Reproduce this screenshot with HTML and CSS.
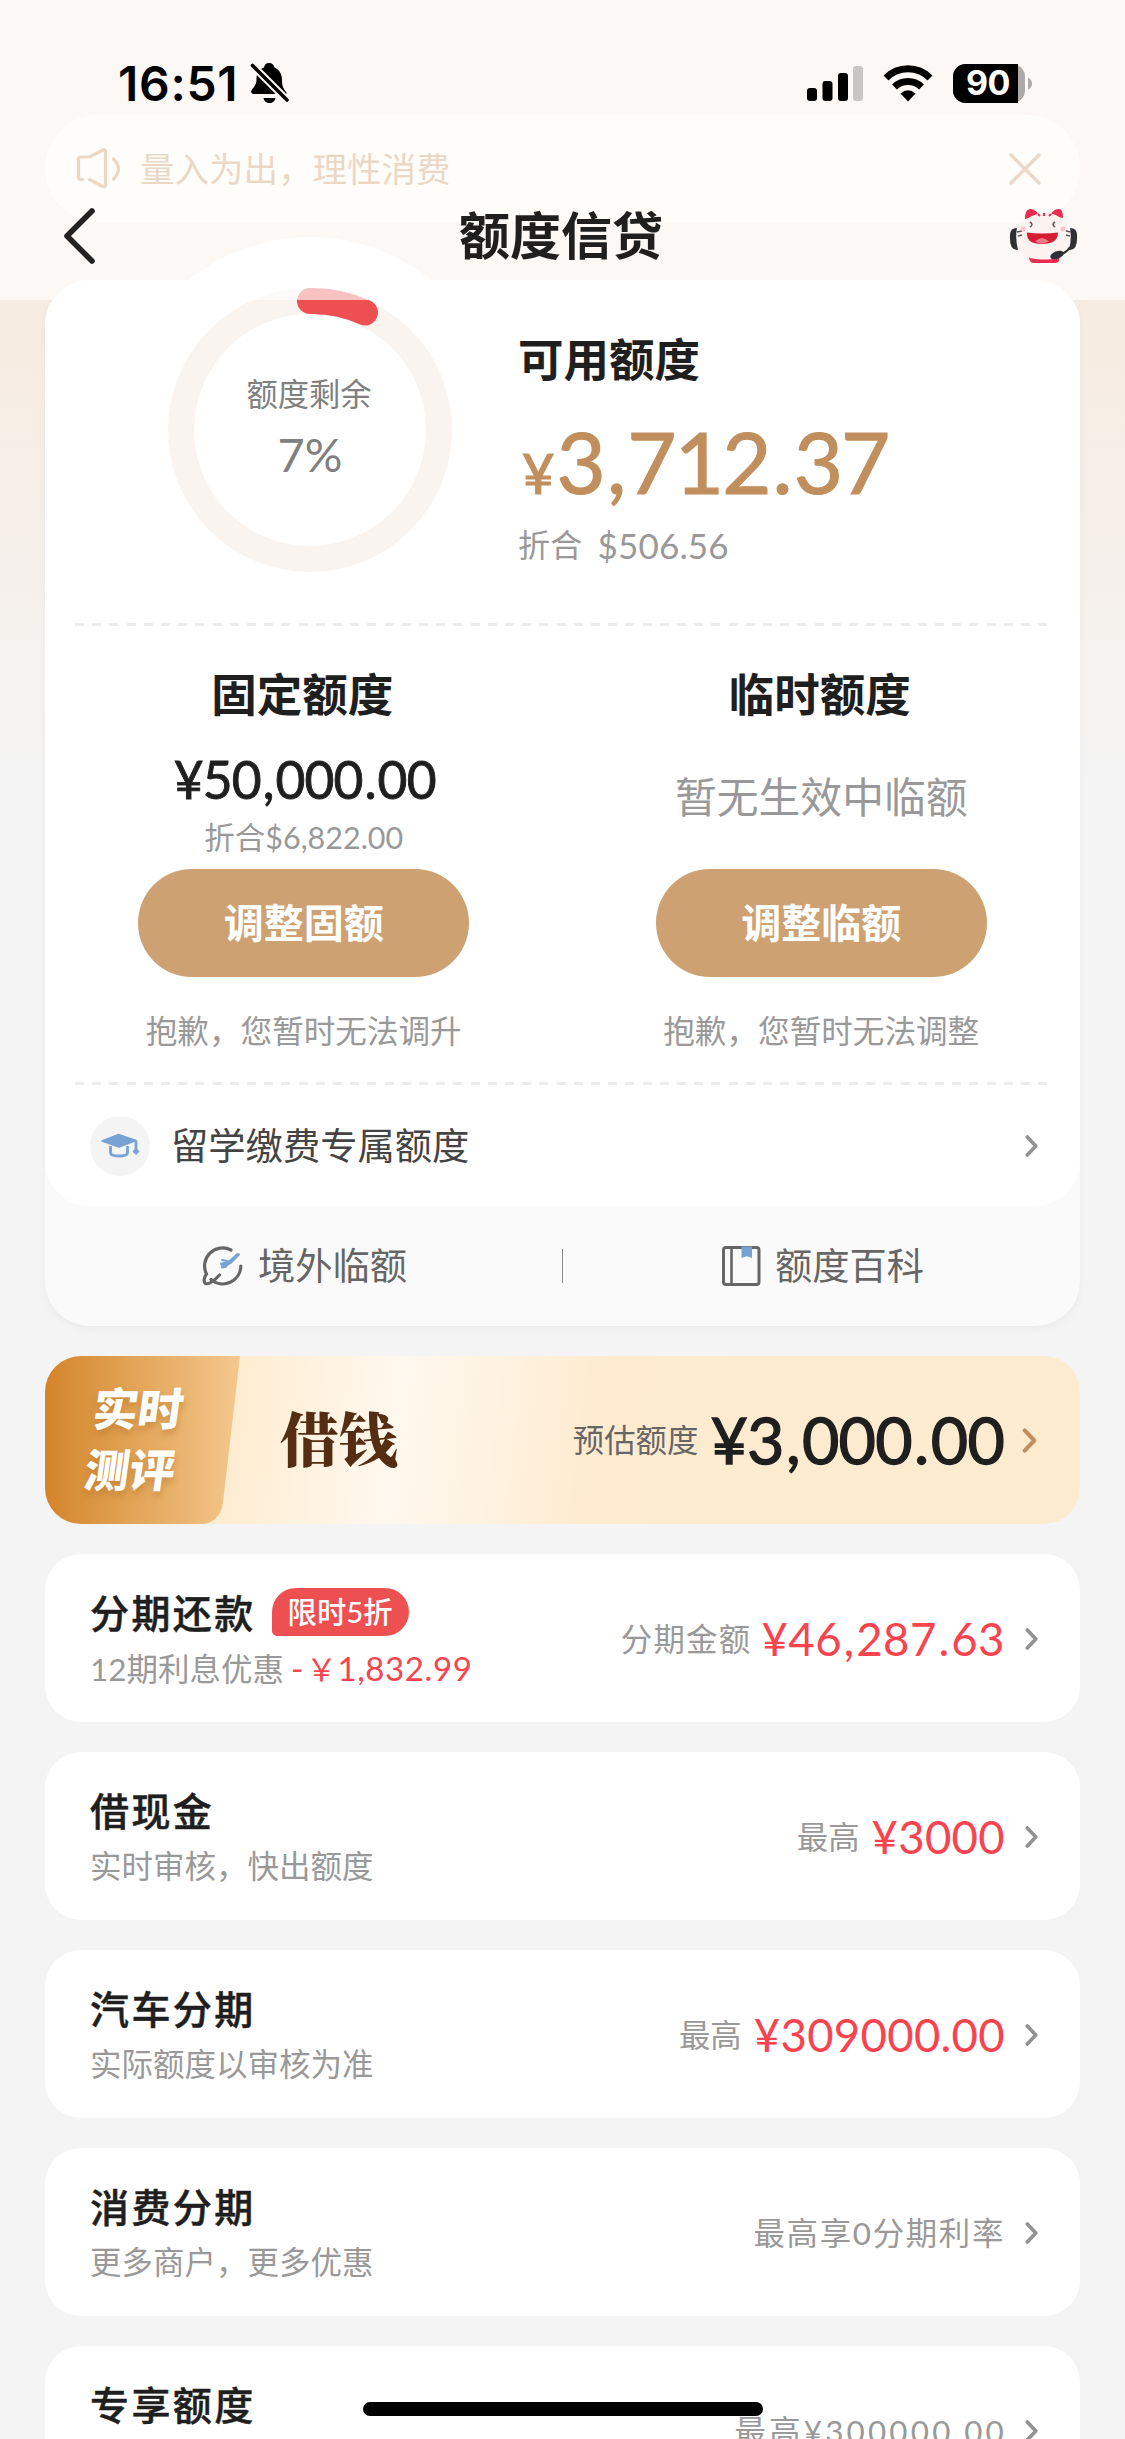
FILE: index.html
```html
<!DOCTYPE html>
<html lang="zh-CN">
<head>
<meta charset="utf-8">
<title>额度信贷</title>
<link rel="stylesheet" href="styles.css">
</head>
<body>
<svg width="0" height="0" class="defs"><defs>
  <symbol id="chev" viewBox="0 0 14 24"><path d="M2.300 3 10.800 12 2.300 21" fill="none" stroke="currentColor" stroke-width="3.600" stroke-linecap="round" stroke-linejoin="round"/></symbol>
</defs></svg>
<div class="page">
  <header class="topbar">
    <div class="status">
      <span class="time">16:51</span>
      <svg class="bell" width="40" height="44" viewBox="0 0 40 44">
        <path d="M19 1C22 1 24 3 24.500 5.500 30 8 32 13 32 18c0 6 1.500 9 4.500 12.500V32H3.500C1 32 .5 29 2 27.500 5.500 23.500 6.500 21 6.500 17 6.500 11 9 7.500 14 5.500 14.500 3 16 1 19 1Z"/>
        <path d="M13.500 36h12c-.5 3-3 5-6 5s-5.500-2-6-5Z"/>
        <path d="M3 4 37 38" stroke="#fdf9f6" stroke-width="7.500"/>
        <path d="M2.500 3.500 37 38" stroke="#000" stroke-width="3.600" stroke-linecap="round"/>
      </svg>
      <svg class="signals" width="230" height="44" viewBox="805 62 230 44">
        <rect x="807" y="88" width="10" height="13" rx="3"/><rect x="822.500" y="81" width="10" height="20" rx="3"/><rect x="838" y="73" width="10" height="28" rx="3"/><rect x="853" y="66" width="10" height="35" rx="3" fill="#c8c6c5"/>
        <g fill="none" stroke="#000" stroke-width="7"><path d="M886 78a31 31 0 0 1 44 0"/><path d="M894.500 87a19.500 19.500 0 0 1 27 0"/></g>
        <path d="M908 101.500 900.500 93.500q7.500-6.500 15 0Z"/>
        <rect x="953" y="64" width="72" height="39" rx="12.500" fill="#adabaa"/>
        <path d="M965.500 64H1018v39H965.500A12.500 12.500 0 0 1 953 90.500v-14A12.500 12.500 0 0 1 965.500 64Z"/>
        <path d="M1028 77.500q4 2 4 6t-4 6Z" fill="#adabaa"/>
        <text x="988" y="95" text-anchor="middle" class="batt">90</text>
      </svg>
    </div>
    <div class="nav">
      <svg width="36" height="60" viewBox="0 0 36 60"><path d="M31 5 6 30 31 55" fill="none" stroke="#222" stroke-width="5.600" stroke-linecap="round" stroke-linejoin="round"/></svg>
      <h1>额度信贷</h1>
      <svg class="mascot" width="70" height="58" viewBox="0 0 70 58">
        <path d="M20 46h30q2 10-4 10H25q-6 0-5-10Z" fill="#e92d50"/>
        <path d="M16 12Q16 1 22 2q6 1 8 7ZM54 11Q54 1 49 2q-6 1-8 7Z" fill="#e92d50"/>
        <path d="M35 6C50 5 62 17 62 32S53 52.500 35 52.500 8 47 8 32 20 7 35 6Z" fill="#fcf3f1"/>
        <path d="M29 7l2 2M35 6v3M42 7l-2 2" stroke="#e92d50" stroke-width="2"/>
        <path d="M1 28q0-7 7-7-2 10 1 22-9 1-8-15ZM68 28q0-7-7-7 2 10-1 22 9 1 8-15Z" fill="#303034"/>
        <path d="M61 40q-3 6-12 8" fill="none" stroke="#303034" stroke-width="2"/><ellipse cx="48" cy="48" rx="7" ry="3.800" fill="#303034" transform="rotate(-20 48 48)"/>
        <path d="M18 25.500q15 2 31 0 0 11.500-16 11.500T18 25.500Z" fill="#d51f35"/><path d="M26 34.500q7-7 14 0-7 4-14 0Z" fill="#ef7883"/>
        <path d="M21 15q4 2.500 0 5M46 15q-4 2.500 0 5M8 25l5-1M9 29l4-1M62 25l-5-1M61 29l-4-1" fill="none" stroke="#5a555b" stroke-width="1.500"/>
        <circle cx="14" cy="22" r="2.500" fill="#fac3cb"/><circle cx="54" cy="22" r="2.500" fill="#fac3cb"/>
      </svg>
    </div>
  </header>

  <div class="notice">
    <svg width="44" height="42" viewBox="0 0 44 42" fill="none" stroke="currentColor" stroke-width="3.200" stroke-linecap="round" stroke-linejoin="round"><path d="M6.500 31.500H5q-2.500 0-2.500-2.500V11.500Q2.500 9 5 9h8.500L27 2q2.500-1 2.500 1.500V37q0 2.500-2.500 1.500L13.500 31.500M37.500 11q10 10 0 20"/></svg>
    <span>量入为出，理性消费</span>
    <svg class="close" width="32" height="32" viewBox="0 0 32 32"><path d="M2 2 30 30M30 2 2 30" stroke="currentColor" stroke-width="3.200" stroke-linecap="round"/></svg>
  </div>

  <main>
    <section class="quota">
      <div class="quota-body">
        <div class="overview">
          <div class="gauge">
            <svg width="386" height="386" viewBox="-193 -193 386 386">
              <circle r="193" fill="#fff"/><circle r="129" fill="none" stroke="#f9f4f0" stroke-width="26"/>
              <path d="M0-129A129 129 0 0 1 55-117.500" fill="none" stroke="#ee5051" stroke-width="26" stroke-linecap="round"/>
            </svg>
            <div class="gauge-label"><span>额度剩余</span><b>7%</b></div>
          </div>
          <div class="available">
            <h2>可用额度</h2>
            <p class="sum"><small>¥</small>3<u>,</u>712<u>.</u>37</p>
            <p class="usd"><span>折合</span>$506.56</p>
          </div>
        </div>
        <div class="dash"></div>
        <div class="limits">
          <div class="limit"><h2>固定额度</h2><div class="limit-value"><strong>¥50<u>,</u>000<u>.</u>00</strong><span>折合$6,822.00</span></div><button>调整固额</button><p>抱歉，您暂时无法调升</p></div>
          <div class="limit"><h2>临时额度</h2><div class="limit-value"><em>暂无生效中临额</em></div><button>调整临额</button><p>抱歉，您暂时无法调整</p></div>
        </div>
        <div class="dash"></div>
        <div class="study">
          <span class="study-icon"><svg width="40" height="26" viewBox="0 0 40 26"><path d="M2 8 18.500 1.500 36 7.500 19 14Z" fill="#76a2d4" stroke="#76a2d4" stroke-width="1.500" stroke-linejoin="round"/><path d="M10.500 13v6.500q0 3.500 8.500 3.500t8.500-3.500V13M36 7.500V18" fill="none" stroke="#76a2d4" stroke-width="2.800"/><path d="M36 14.500l3.500 4-3.500 3.500-3.500-3.500Z" fill="#76a2d4"/></svg></span>
          <span class="label">留学缴费专属额度</span>
          <svg class="chev"><use href="#chev"/></svg>
        </div>
      </div>
      <div class="links">
        <div class="link">
          <svg width="42" height="42" viewBox="0 0 42 42" fill="none" stroke="#666" stroke-width="3.200" stroke-linecap="round"><path d="M29 5A18 18 0 0 0 4.500 29C1.500 33 1.500 37 3.500 38.500c3 1 8-2 14-8.500M9 34.500A18 18 0 0 0 38.800 21"/><path d="M37 9.500 28.500 18 23 21.500 20 21 19 18.500 26 17.500 35.500 9Z M20 15 27 16.500M20 22.500 24.500 21.500" fill="#76a2d4" stroke="#76a2d4" stroke-width="2" stroke-linejoin="round"/></svg>
          <span class="label">境外临额</span>
        </div>
        <i></i>
        <div class="link">
          <svg width="40" height="42" viewBox="0 0 40 42"><rect x="2.500" y="2.500" width="35.500" height="37" rx="2.500" fill="none" stroke="#666" stroke-width="3"/><path d="M10.500 3v36" stroke="#666" stroke-width="2.600"/><path d="M20.500 1.500H31V13l-5.200-1.700L20.500 13Z" fill="#76a2d4"/></svg>
          <span class="label">额度百科</span>
        </div>
      </div>
    </section>

    <section class="loan">
      <svg class="loan-tab" width="195" height="168" viewBox="0 0 195 168"><defs><linearGradient id="g"><stop offset="0" stop-color="#d3842a"/><stop offset=".3" stop-color="#dd9a48"/><stop offset="1" stop-color="#f4c88e"/></linearGradient></defs><path d="M0 0H195L178 146Q175 168 154 168H0Z" fill="url(#g)"/></svg>
      <div class="loan-tag"><span>实时</span><span>测评</span></div>
      <h2>借钱</h2>
      <div class="value"><span>预估额度</span><strong>¥3<u>,</u>000<u>.</u>00</strong><svg class="chev"><use href="#chev"/></svg></div>
    </section>

    <section class="row">
      <div class="info"><div class="title"><h3>分期还款</h3><span class="badge">限时5折</span></div><p>12期利息优惠<b><i>-</i><i>￥</i>1,832.99</b></p></div>
      <div class="value spaced"><span>分期金额</span><strong>¥46<u>,</u>287<u>.</u>63</strong><svg class="chev"><use href="#chev"/></svg></div>
    </section>
    <section class="row">
      <div class="info"><div class="title"><h3>借现金</h3></div><p>实时审核，快出额度</p></div>
      <div class="value"><span>最高</span><strong>¥3000</strong><svg class="chev"><use href="#chev"/></svg></div>
    </section>
    <section class="row">
      <div class="info"><div class="title"><h3>汽车分期</h3></div><p>实际额度以审核为准</p></div>
      <div class="value"><span>最高</span><strong>¥309000.00</strong><svg class="chev"><use href="#chev"/></svg></div>
    </section>
    <section class="row">
      <div class="info"><div class="title"><h3>消费分期</h3></div><p>更多商户，更多优惠</p></div>
      <div class="value plain"><span>最高享0分期利率</span><svg class="chev"><use href="#chev"/></svg></div>
    </section>
    <section class="row">
      <div class="info"><div class="title"><h3>专享额度</h3></div></div>
      <div class="value plain wide"><span>最高¥300000.00</span><svg class="chev"><use href="#chev"/></svg></div>
    </section>
  </main>
  <div class="home-indicator"></div>
</div>
</body>
</html>
```
FILE: styles.css
```css
* { box-sizing: border-box; margin: 0; padding: 0; }
html, body { height: 2439px; overflow: hidden; }
body { font-family: Lato, "Noto Sans CJK SC", sans-serif; font-kerning: none; color: #1f1f1f; }
.defs { position: absolute; }
i, em { font-style: normal; }
/* separators inside large amounts get a little air */
u { text-decoration: none; margin: 0 .035em; }
.page {
  position: relative; height: 2439px; overflow: hidden; padding-top: 115px;
  background: #f4f4f4 linear-gradient(#f7ece2 0, #f7ece2 340px, #f4f4f4 780px) no-repeat;
}

/* translucent header over the scrolled content */
.topbar { position: absolute; z-index: 2; inset: 0 0 auto; height: 300px; background: rgba(255, 255, 255, .65); }
.status { display: flex; align-items: center; height: 168px; padding: 0 90px 0 118px; }
.time { font: 600 48px/60px Inter, sans-serif; letter-spacing: .7px; color: #000; }
.bell { margin-left: 12px; }
.signals { margin-left: auto; }
.batt { font: 700 34px Inter, sans-serif; fill: #fff; letter-spacing: -.5px; }
.nav { display: flex; align-items: center; justify-content: space-between; height: 136px; padding: 0 46px 0 61px; }
.nav h1 { font-size: 51px; line-height: 60px; font-weight: 700; margin-left: 16px; }
.mascot { display: block; }

.notice {
  display: flex; align-items: center; height: 107px; margin: 0 45px; padding: 0 39px 0 31px;
  border-radius: 54px; background: #fdfaef; color: #c48c5c; font-size: 34.5px;
}
.notice span { margin: -4px 0 0 20px; }
.close { margin-left: auto; }

main { display: flex; flex-direction: column; gap: 30px; margin: 58px 45px 0; }
h2 { font-size: 45.5px; line-height: 60px; font-weight: 700; }
.chev { flex: none; width: 14px; height: 24px; color: #929292; }

.quota { height: 1046px; border-radius: 45px; background: #fafafa; box-shadow: 0 3px 8px rgba(0, 0, 0, .04); }
.quota-body { height: 926px; border-radius: 45px; background: #fff; }
.overview { display: flex; height: 343px; }
.gauge { position: relative; width: 386px; height: 386px; margin: -43px 0 0 72px; }
.gauge svg { display: block; }
.gauge-label {
  position: absolute; inset: 0; display: flex; flex-direction: column; align-items: center;
  padding-top: 137px; color: #808080; font-size: 31.3px; line-height: 40px;
}
.gauge-label span { margin-left: -2px; }
.gauge-label b { margin-top: 13px; font-size: 47px; line-height: 54px; font-weight: 400; }
.available { padding: 50px 0 0 15px; }
.sum { display: flex; align-items: baseline; margin-top: 19px; color: #c18f5d; font-size: 85px; line-height: 104px; letter-spacing: -1.9px; -webkit-text-stroke: 1.2px; }
.sum small { margin: 0 4px 0 4px; font-size: 56px; line-height: 60px; }
.usd { display: flex; gap: 15px; align-items: center; margin-top: 7px; color: #999; font-size: 35px; line-height: 50px; letter-spacing: .2px; }
.usd span { font-size: 32px; }
.dash { height: 3px; margin: 0 30px; background: repeating-linear-gradient(90deg, #ececec 0 9px, transparent 9px 17.2px); }
.limits { display: flex; height: 456px; }
.limit { flex: 1; display: flex; flex-direction: column; align-items: center; padding-top: 39px; }
.limit h2 { margin-left: -3px; }
.limit-value { display: flex; flex-direction: column; align-items: center; height: 144px; padding-top: 23px; color: #999; font-size: 30.5px; line-height: 46px; }
.limit-value span { margin-top: 4px; }
.limit-value strong { margin-left: 2px; color: #1f1f1f; font-size: 51.5px; line-height: 62px; font-weight: 400; letter-spacing: -.8px; -webkit-text-stroke: .9px; }
.limit-value em { padding-top: 18px; font-size: 41.8px; line-height: 62px; }
button { width: 331px; height: 108px; border: 0; border-radius: 54px; background: #cda172; color: #fff; font: 700 40px/100px Lato, "Noto Sans CJK SC", sans-serif; }
.limit p { margin-top: 34px; color: #999; font-size: 31.6px; line-height: 40px; }
.study { display: flex; align-items: center; height: 121px; padding: 0 41px 0 45px; color: #444; font-size: 37.3px; }
.study-icon { display: grid; place-items: center; width: 60px; height: 60px; margin-right: 21px; border-radius: 50%; background: #f4f4f4; }
.label { margin-top: -3px; }
.study .chev { margin-left: auto; }
.links { display: flex; align-items: center; height: 120px; color: #666; font-size: 37.3px; }
.links .label { margin-top: -5px; }
.link { flex: 1; display: flex; align-items: center; justify-content: center; gap: 14px; padding-left: 2px; }
.links i { width: 1px; height: 34px; background: #888; }

.loan {
  position: relative; display: flex; align-items: center; height: 168px; padding-right: 42px; overflow: hidden; border-radius: 36px;
  background: linear-gradient(97deg, #feecd0 18%, #fff8ee 34%, #fef3e2 42%, #feebd0 53%, #fdebd0);
}
.loan-tab { flex: none; margin-right: -195px; }
.loan-tag {
  position: relative; width: 150px; margin-left: 14px; transform: skewX(-8deg); text-align: center;
  color: #fff; font-size: 45px; line-height: 61px; font-weight: 900; text-shadow: 1px 5px 7px rgba(170, 100, 25, .4);
}
.loan-tag span { display: block; }
.loan h2 { margin: -6px 0 0 71px; color: #542d12; font: 900 59px/80px "Noto Serif CJK SC", "Noto Sans CJK SC", serif; }
.value { display: flex; align-items: center; margin-left: auto; color: #999; font-size: 31.4px; white-space: nowrap; }
.value > span { margin-top: -3px; }
.value strong { margin: -1px 20px 0 12px; color: #f94450; font-size: 45.5px; font-weight: 400; line-height: 56px; letter-spacing: .3px; }
.spaced > span { letter-spacing: 1.300px; }
.spaced strong { margin-left: 10px; letter-spacing: .5px; }
.loan .value { color: #666; }
.loan .value strong { color: #1f1f1f; font-size: 64.5px; line-height: 80px; letter-spacing: -.8px; margin: -2px 18px 0 12px; -webkit-text-stroke: 1.3px; }
.loan .chev { width: 16px; height: 27px; color: #c18f5d; }

.row { display: flex; height: 168px; padding: 35px 41px 0 45px; border-radius: 36px; background: #fff; }
.title { display: flex; align-items: center; height: 48px; }
.row h3 { font-size: 39px; line-height: 48px; font-weight: 500; letter-spacing: 2.400px; -webkit-text-stroke: .5px; }
.badge { height: 48px; margin: -2px 0 0 16px; padding: 0 16px; border-radius: 24px 24px 24px 5px; background: #ee5051; color: #fff; font-size: 29.3px; line-height: 47px; font-weight: 500; }
.info p { margin-top: 11px; color: #999; font-size: 31.5px; line-height: 40px; white-space: nowrap; }
.info b { color: #f94450; font-weight: 400; font-size: 33px; letter-spacing: .6px; }
.info b i:first-child { margin: 0 2px 0 7px; }
.info b i + i { font-size: 31px; }
.row .value { height: 100px; }
.plain span { margin-right: 20px; letter-spacing: 1.7px; }
.wide span { letter-spacing: 3.200px; margin-right: 18px; }
.home-indicator { position: absolute; z-index: 3; left: 363px; top: 2402px; width: 400px; height: 14px; border-radius: 7px; background: #000; }
```
